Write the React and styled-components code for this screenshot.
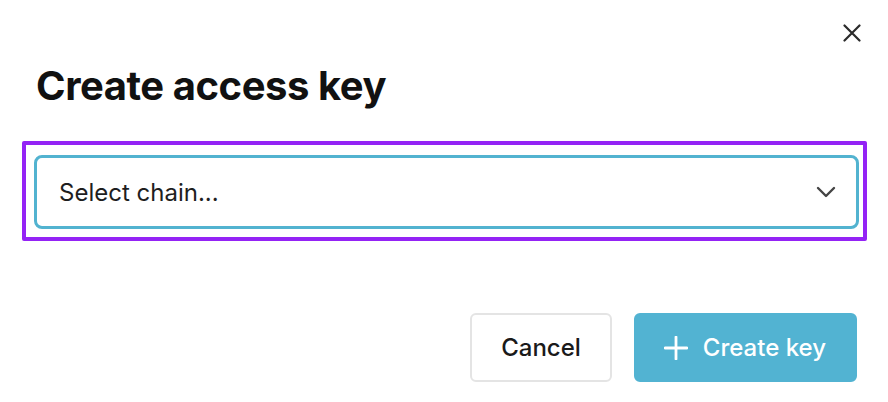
import React, { useState } from 'react';
import styled, { createGlobalStyle } from 'styled-components';

const GlobalStyle = createGlobalStyle`
  * {
    box-sizing: border-box;
  }
  body {
    margin: 0;
    background: #ffffff;
    font-family: Inter, 'Noto Sans', sans-serif;
    color: #111111;
  }
`;

const SDialog = styled.section`
  position: relative;
  width: 888px;
  height: 402px;
  padding: 66px 31px 0 22px;
  background-color: #ffffff;
`;

const SCloseButton = styled.button`
  position: absolute;
  top: 20px;
  right: 23px;
  display: flex;
  align-items: center;
  justify-content: center;
  width: 26px;
  height: 26px;
  padding: 0;
  border: none;
  background: none;
  color: #2b2b2b;
  cursor: pointer;
`;

const STitle = styled.h2`
  margin: 0 0 35px 14px;
  font-size: 40px;
  line-height: 40px;
  font-weight: 700;
  letter-spacing: -0.45px;
  color: #111111;
`;

const SHighlight = styled.div`
  margin-right: -10px;
  padding: 10px 4px 8px 8px;
  border: 4px solid #9423f5;
  border-radius: 2px;
`;

const SSelect = styled.button`
  display: flex;
  width: 100%;
  height: 74px;
  align-items: center;
  justify-content: space-between;
  padding: 0 20px 0 22px;
  border: 3px solid #52b3d0;
  border-radius: 8px;
  background-color: #ffffff;
  font-family: inherit;
  font-size: 24px;
  color: #1e1e1e;
  cursor: pointer;
`;

const SFooter = styled.div`
  display: flex;
  justify-content: flex-end;
  gap: 22px;
  margin-top: 72px;
`;

const SButton = styled.button`
  display: flex;
  height: 69px;
  align-items: center;
  justify-content: center;
  gap: 15px;
  padding: ${({ $primary }) => ($primary ? '0 29px 0 28px' : '0 29px')};
  border: 2px solid ${({ $primary }) => ($primary ? '#52b3d2' : '#e4e4e4')};
  border-radius: 6px;
  background-color: ${({ $primary }) => ($primary ? '#52b3d2' : '#ffffff')};
  font-family: inherit;
  font-size: 24px;
  font-weight: 500;
  color: ${({ $primary }) => ($primary ? '#ffffff' : '#1a1a1a')};
  cursor: pointer;
`;

function CloseIcon() {
  return (
    <svg width="18" height="18" viewBox="0 0 18 18" fill="none">
      <path d="M1.5 1.5l15 15M16.5 1.5l-15 15" stroke="currentColor" strokeWidth="2.2" strokeLinecap="round" />
    </svg>
  );
}

function ChevronIcon() {
  return (
    <svg width="20" height="12" viewBox="0 0 20 12" fill="none">
      <path d="M2 2l8 8 8-8" stroke="#444444" strokeWidth="2.4" strokeLinecap="round" strokeLinejoin="round" />
    </svg>
  );
}

function PlusIcon() {
  return (
    <svg width="24" height="24" viewBox="0 0 24 24" fill="none">
      <path d="M12 1v22M1 12h22" stroke="currentColor" strokeWidth="2.8" strokeLinecap="round" />
    </svg>
  );
}

function App() {
  const [chain] = useState('');

  return (
    <SDialog>
      <GlobalStyle />
      <SCloseButton type="button" aria-label="닫기">
        <CloseIcon />
      </SCloseButton>
      <STitle>Create access key</STitle>
      <SHighlight>
        <SSelect type="button">
          <span>{chain || 'Select chain...'}</span>
          <ChevronIcon />
        </SSelect>
      </SHighlight>
      <SFooter>
        <SButton type="button">Cancel</SButton>
        <SButton type="button" $primary>
          <PlusIcon />
          Create key
        </SButton>
      </SFooter>
    </SDialog>
  );
}

export default App;
